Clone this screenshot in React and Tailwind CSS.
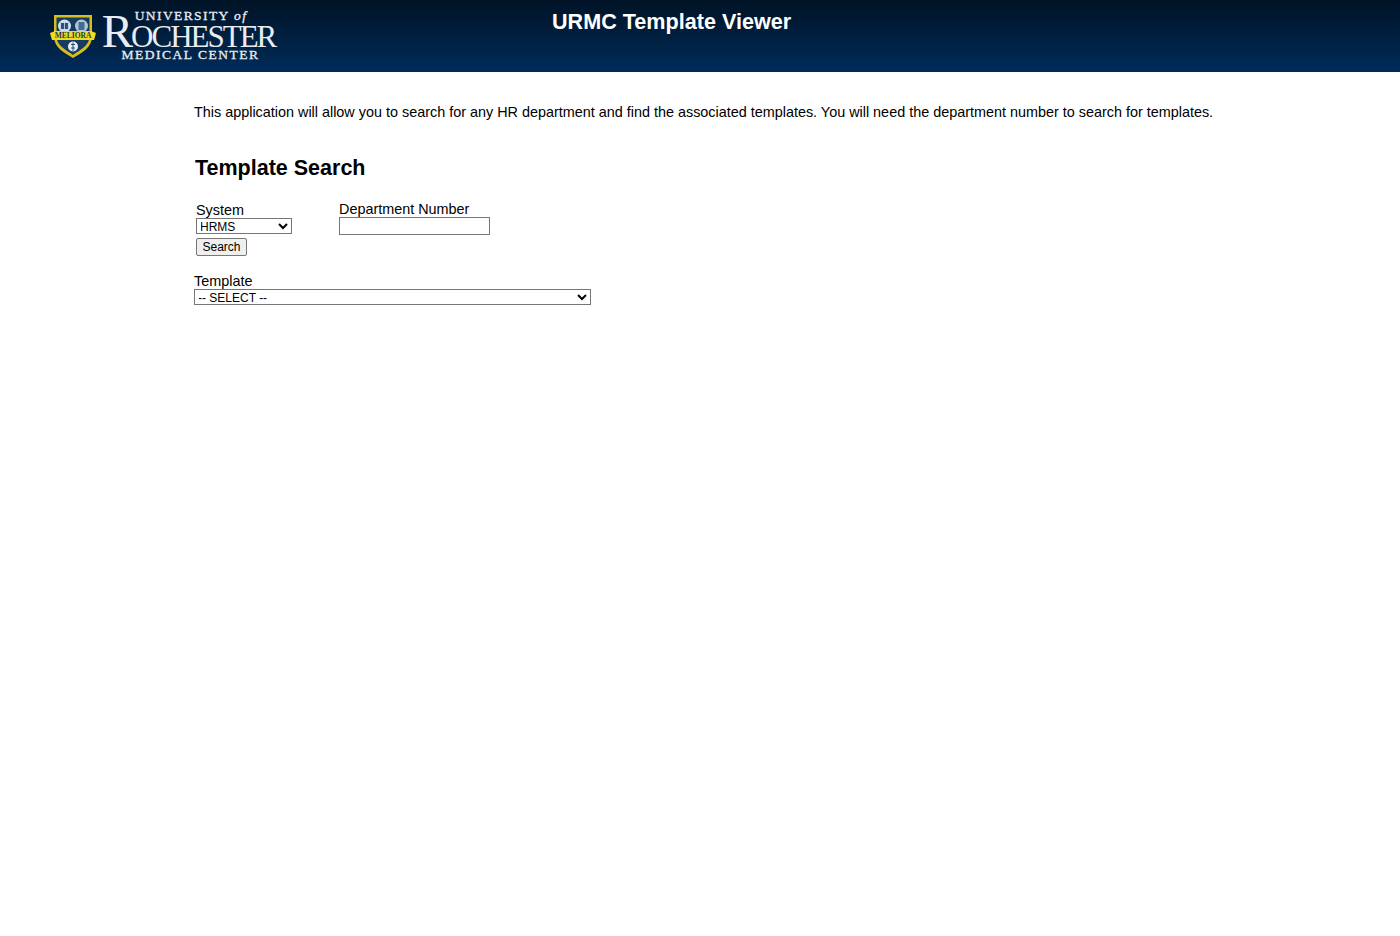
import React from 'react';

const Shield = () => (
  <svg width="46" height="46" viewBox="0 0 46 46" className="shrink-0">
    <path d="M4 2 H42 V24 C42 34 32 40 23 45 C14 40 4 34 4 24 Z" fill="#d8bd1e" />
    <path d="M6.5 4.5 H39.5 V24 C39.5 32 30 37 23 42 C16 37 6.5 32 6.5 24 Z" fill="#173c63" />
    <circle cx="14.5" cy="13" r="6.5" fill="#d5dfe8" />
    <circle cx="31.5" cy="13" r="6.5" fill="#b4c6d6" />
    <path d="M10.5 9.5 H18.5 V16.5 H10.5 Z M14.5 9.5 V16.5" fill="#2a5480" stroke="#e6edf3" strokeWidth="0.7" />
    <path d="M28.5 9 H34.5 V17 H28.5 Z" fill="#466b90" />
    <path d="M0 20 L5 18 H41 L46 20 L44 27 H2 Z" fill="#efdc1a" />
    <circle cx="23" cy="33.5" r="5" fill="#e8eef3" />
    <path d="M23 29.5 V38 M21 31.5 H25 M21 35 H25" stroke="#234a73" strokeWidth="1" />
  </svg>
);

const Logo = () => (
  <div className="flex items-start gap-[5px] font-['Liberation_Serif',serif] text-[#e9edf2]">
    <div className="relative mt-[4px]">
      <Shield />
      <span className="absolute left-[2px] top-[18px] w-[42px] text-center text-[7.5px] leading-[9px] font-bold text-[#173c63]">MELIORA</span>
    </div>
    <div className="flex w-[175px] flex-col items-center">
      <div className="ml-[5px] text-[13.5px] leading-[13px] tracking-[1.4px] whitespace-nowrap [-webkit-text-stroke:0.3px]">
        UNIVERSITY <span className="italic">of</span>
      </div>
      <div className="mt-[1px] flex h-[24px] items-baseline text-[31px] leading-[24px] tracking-[-2px] whitespace-nowrap">
        <span className="text-[47px] leading-[16px]">R</span>OCHESTER
      </div>
      <div className="mt-[1px] ml-[4px] text-[13.5px] leading-[13px] tracking-[1.5px] whitespace-nowrap [-webkit-text-stroke:0.3px]">MEDICAL CENTER</div>
    </div>
  </div>
);

const App = () => {
  return (
    <div className="min-h-[936px] bg-white font-['Liberation_Sans',Arial,sans-serif] text-black">
      <header className="flex h-[72px] items-start bg-gradient-to-b from-[#001326] to-[#002c5a]">
        <div className="ml-[50px] mt-[9px]">
          <Logo />
        </div>
        <h1 className="ml-[276px] mt-[8px] text-[21.6px] leading-[27px] font-bold text-white">URMC Template Viewer</h1>
      </header>

      <main className="pl-[194px]">
        <p className="mt-[32px] text-[14.4px] leading-[17px]">
          This application will allow you to search for any HR department and find the associated templates. You will need the department number to search for templates.
        </p>
        <h2 className="mt-[35px] ml-px text-[21.5px] leading-[25px] font-bold">Template Search</h2>

        <div className="mt-[20px] ml-[2px] flex items-start">
          <div className="w-[143px] pt-px">
            <label className="block text-[14.4px] leading-[16px]">System</label>
            <select className="block h-[16px] w-[96px] rounded-none border border-[#767676] bg-white pb-[2px] pl-0 text-[12px] leading-[14px] [text-indent:-1px]" defaultValue="HRMS">
              <option>HRMS</option>
            </select>
            <button className="mt-[4px] block h-[18px] w-[51px] rounded-[2px] border border-[#767676] bg-[#efefef] text-[12px] leading-[14px]">Search</button>
          </div>
          <div>
            <label className="block text-[14.4px] leading-[16px]">Department Number</label>
            <input type="text" className="block h-[18px] w-[151px] border border-[#767676] bg-white text-[12px]" />
          </div>
        </div>

        <div className="mt-[17px]">
          <label className="block text-[14.4px] leading-[16px]">Template</label>
          <select className="block h-[16px] w-[397px] rounded-none border border-[#767676] bg-white pb-[2px] pl-0 text-[12px] leading-[14px] [text-indent:-1px]" defaultValue="-- SELECT --">
            <option>-- SELECT --</option>
          </select>
        </div>
      </main>
    </div>
  );
};

export default App;
